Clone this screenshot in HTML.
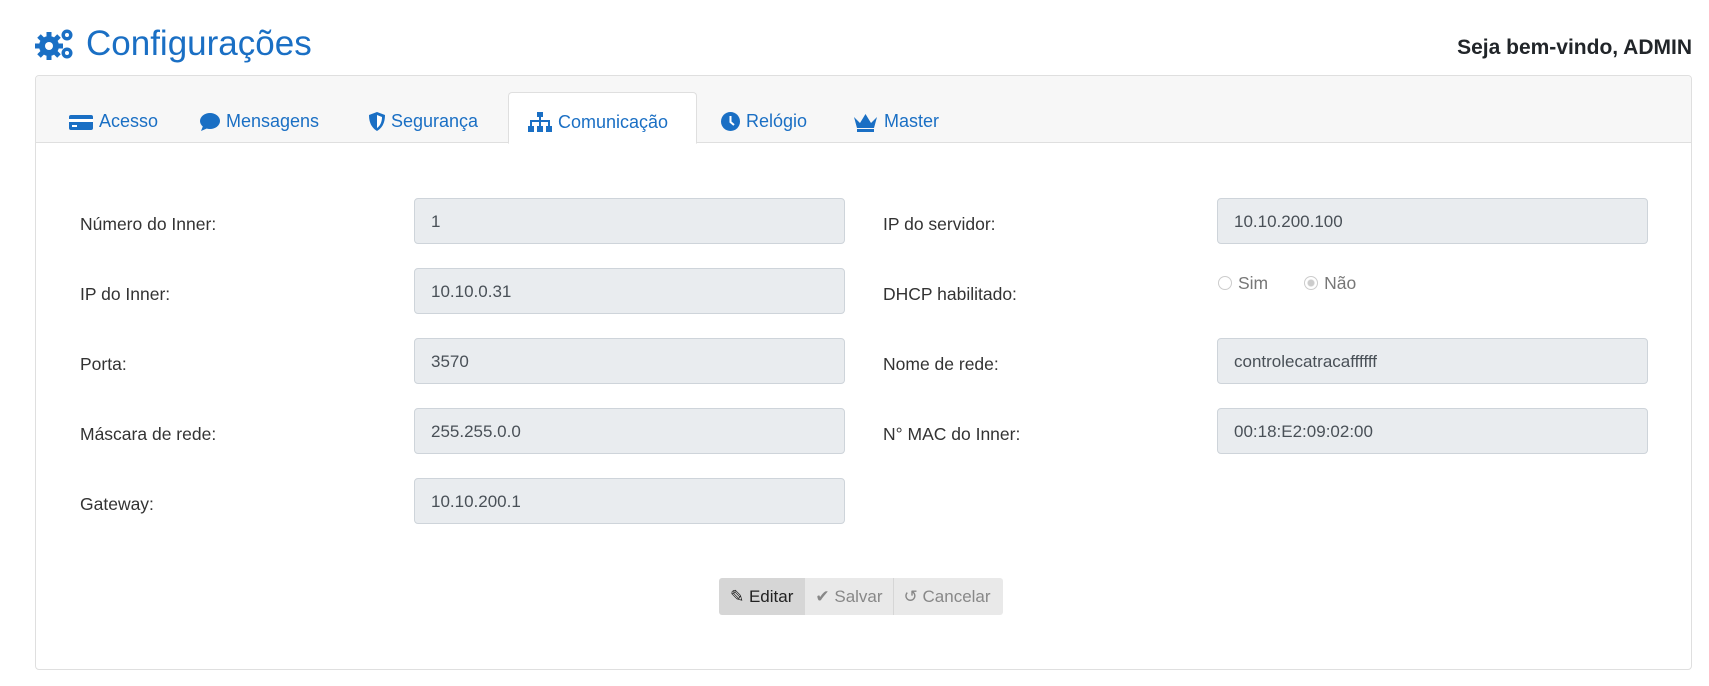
<!DOCTYPE html>
<html><head><meta charset="utf-8"><style>
*{box-sizing:border-box;margin:0;padding:0}
body{width:1709px;height:686px;background:#fff;font-family:"Liberation Sans",sans-serif;color:#212529;position:relative;overflow:hidden}
h1{position:absolute;left:34px;top:24px;font-size:35px;font-weight:normal;color:#1a6fc4;display:flex;align-items:center;gap:10px}
.welcome{position:absolute;right:17px;top:36px;font-size:21px;font-weight:bold}
.card{position:absolute;left:35px;top:75px;width:1657px;height:595px;border:1px solid #dfdfdf;border-radius:4px}
.bar{position:absolute;left:0;top:0;right:0;height:67px;background:#f7f7f7;border-bottom:1px solid #dfdfdf;border-radius:4px 4px 0 0}
.tab{position:absolute;top:24px;height:43px;display:flex;align-items:center;gap:6px;font-size:18px;color:#1a6fc4}
.tab.active{background:#fff;border:1px solid #dfdfdf;border-bottom:1px solid #fff;border-radius:4px 4px 0 0;top:16px;height:52px;padding:0 28px 0 19px;padding-top:8px}
.lbl{position:absolute;font-size:17.5px;color:#333}
.inp{position:absolute;height:46px;background:#e9ecef;border:1px solid #ced4da;border-radius:4px;font-size:17px;color:#495057;padding:13px 16px}
.btns{position:absolute;left:719px;top:578px;height:37px;display:flex;font-size:17px}
.btns div{display:flex;align-items:center;gap:4px;padding:0 10px;background:#e9e9e9;color:#888}
.btns div:first-child{background:#d6d6d6;color:#222;border-radius:3px 0 0 3px;padding:0 11px}
.btns div:last-child{border-radius:0 3px 3px 0;border-left:1px solid #d6d6d6;padding:0 12px 0 10px}
.btns div:nth-child(2){border-left:1px solid #d6d6d6}
.radio{display:inline-block;width:14px;height:14px;border:1px solid #ccc;border-radius:50%;vertical-align:-1px;margin-right:6px;background:#fff;position:relative}
</style></head><body>
<h1><svg width="42" height="36" viewBox="0 0 42 36"><g fill="#1a6fc4"><circle cx="15" cy="20" r="10"/><g stroke="#1a6fc4" stroke-width="5"><line x1="15" y1="6" x2="15" y2="34"/><line x1="1" y1="20" x2="29" y2="20"/><line x1="5" y1="10" x2="25" y2="30"/><line x1="25" y1="10" x2="5" y2="30"/></g><circle cx="15" cy="20" r="4" fill="#fff"/><circle cx="33" cy="9" r="5.5"/><circle cx="33" cy="27" r="5.5"/><circle cx="33" cy="9" r="2" fill="#fff"/><circle cx="33" cy="27" r="2" fill="#fff"/></g></svg>Configurações</h1>
<div class="welcome">Seja bem-vindo, ADMIN</div>
<div class="card">
<div class="bar">
<div class="tab" style="left:33px"><svg width="24" height="18"><rect x="0" y="2" width="24" height="15" rx="2" fill="#1a6fc4"/><rect x="0" y="6" width="24" height="3" fill="#fff"/><rect x="3" y="12" width="5" height="2" fill="#fff"/></svg>Acesso</div>
<div class="tab" style="left:164px"><svg width="20" height="18"><ellipse cx="10" cy="8" rx="10" ry="8" fill="#1a6fc4"/><path d="M3 13 L1 18 L8 15Z" fill="#1a6fc4"/></svg>Mensagens</div>
<div class="tab" style="left:333px"><svg width="16" height="19"><path d="M8 0 L16 3 C16 11 13 16 8 19 C3 16 0 11 0 3Z" fill="#1a6fc4"/><path d="M8 3 L13 5 C13 10 11 14 8 16Z" fill="#fff"/></svg>Segurança</div>
<div class="tab active" style="left:472px"><svg width="24" height="20"><g fill="#1a6fc4"><rect x="9" y="0" width="6" height="5"/><rect x="0" y="14" width="6" height="6"/><rect x="9" y="14" width="6" height="6"/><rect x="18" y="14" width="6" height="6"/><rect x="11" y="5" width="2" height="9"/><rect x="2" y="8" width="20" height="2"/><rect x="2" y="8" width="2" height="6"/><rect x="20" y="8" width="2" height="6"/></g></svg>Comunicação</div>
<div class="tab" style="left:685px"><svg width="19" height="19"><circle cx="9.5" cy="9.5" r="9.5" fill="#1a6fc4"/><path d="M9.5 4 V10 L13 13" stroke="#fff" stroke-width="2" fill="none"/></svg>Relógio</div>
<div class="tab" style="left:817px"><svg width="25" height="20"><path d="M1 5 L7 11 L12.5 2 L18 11 L24 5 L21 16 H4Z M4 17 H21 V20 H4Z" fill="#1a6fc4"/></svg>Master</div>
</div>
</div>
<div class="lbl" style="left:80px;top:214px">Número do Inner:</div>
<div class="lbl" style="left:80px;top:284px">IP do Inner:</div>
<div class="lbl" style="left:80px;top:354px">Porta:</div>
<div class="lbl" style="left:80px;top:424px">Máscara de rede:</div>
<div class="lbl" style="left:80px;top:494px">Gateway:</div>
<div class="inp" style="left:414px;top:198px;width:431px">1</div>
<div class="inp" style="left:414px;top:268px;width:431px">10.10.0.31</div>
<div class="inp" style="left:414px;top:338px;width:431px">3570</div>
<div class="inp" style="left:414px;top:408px;width:431px">255.255.0.0</div>
<div class="inp" style="left:414px;top:478px;width:431px">10.10.200.1</div>
<div class="lbl" style="left:883px;top:214px">IP do servidor:</div>
<div class="lbl" style="left:883px;top:284px">DHCP habilitado:</div>
<div class="lbl" style="left:883px;top:354px">Nome de rede:</div>
<div class="lbl" style="left:883px;top:424px">N° MAC do Inner:</div>
<div class="inp" style="left:1217px;top:198px;width:431px">10.10.200.100</div>
<div class="lbl" style="left:1218px;top:273px;color:#777"><span class="radio"></span>Sim<span style="display:inline-block;width:36px"></span><span class="radio" style="background:radial-gradient(#ccc 3px,#fff 4px)"></span>Não</div>
<div class="inp" style="left:1217px;top:338px;width:431px">controlecatracaffffff</div>
<div class="inp" style="left:1217px;top:408px;width:431px">00:18:E2:09:02:00</div>
<div class="btns"><div>✎ Editar</div><div>✔ Salvar</div><div>↺ Cancelar</div></div>
</body></html>
